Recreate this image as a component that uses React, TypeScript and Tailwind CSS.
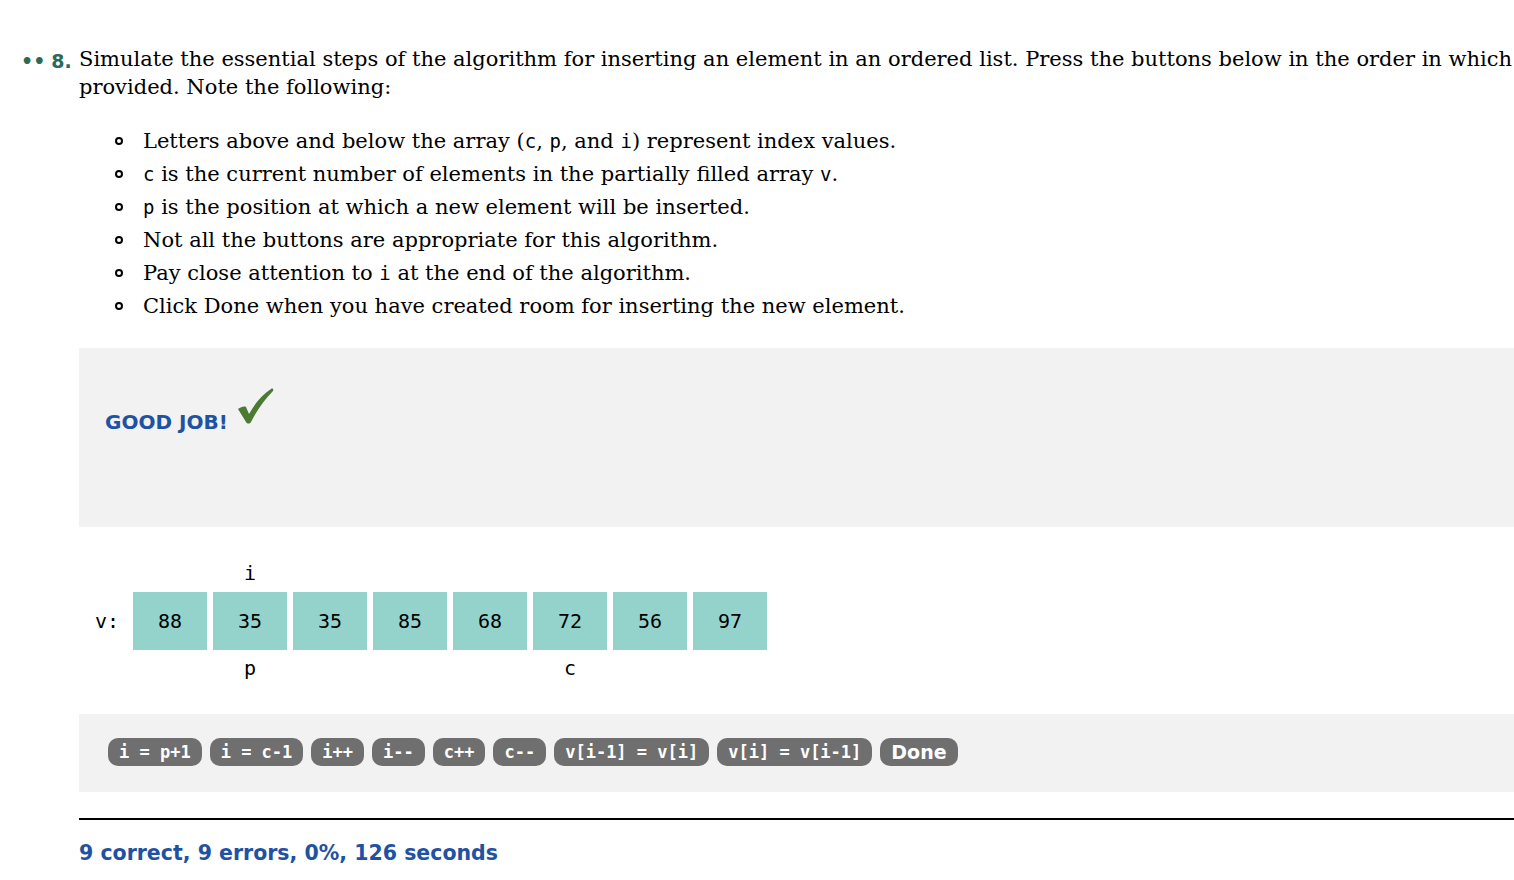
import React from 'react';

const serif = { fontFamily: '"DejaVu Serif", "Liberation Serif", serif' };
const mono = "font-['DejaVu_Sans_Mono',monospace] text-[19px] leading-none";

const notes: React.ReactNode[] = [
  <>Letters above and below the array (<code className={mono}>c</code>, <code className={mono}>p</code>, and <code className={mono}>i</code>) represent index values.</>,
  <><code className={mono}>c</code> is the current number of elements in the partially filled array <code className={mono}>v</code>.</>,
  <><code className={mono}>p</code> is the position at which a new element will be inserted.</>,
  <>Not all the buttons are appropriate for this algorithm.</>,
  <>Pay close attention to <code className={mono}>i</code> at the end of the algorithm.</>,
  <>Click Done when you have created room for inserting the new element.</>,
];

const cells = [88, 35, 35, 85, 68, 72, 56, 97];
const buttons = ['i = p+1', 'i = c-1', 'i++', 'i--', 'c++', 'c--', 'v[i-1] = v[i]', 'v[i] = v[i-1]'];

export default function App() {
  return (
    <div className="min-h-screen bg-white overflow-hidden pt-[45px]">
      <div className="flex">
        {/* question number */}
        <div className="w-[79px] shrink-0 flex items-start pl-[21px] pt-[4px] font-['DejaVu_Sans',sans-serif] font-bold text-[19px] leading-[24px] text-[#2b6a5b]">
          <span className="mr-[6px]">••</span>
          <span>8.</span>
        </div>

        <div className="w-[1436px] shrink-0">
          <p className="text-[21px] leading-[28px] text-black whitespace-nowrap" style={serif}>
            Simulate the essential steps of the algorithm for inserting an element in an ordered list. Press the buttons below in the order in which
            <br />
            provided. Note the following:
          </p>

          <ul className="mt-[26px] pl-[36px] flex flex-col gap-[5px]" style={serif}>
            {notes.map((n, i) => (
              <li key={i} className="flex items-center h-[28px] text-[21px] leading-[28px] text-black">
                <span className="w-[8px] h-[8px] rounded-full border-2 border-black mr-[20px] shrink-0"></span>
                <span>{n}</span>
              </li>
            ))}
          </ul>

          {/* feedback box */}
          <div className="mt-[28px] h-[179px] bg-[#f2f2f2] flex items-center pl-[26px] pb-[50px]">
            <span className="font-['DejaVu_Sans',sans-serif] font-bold text-[20px] text-[#1f52a2] mt-[18px]">GOOD JOB!</span>
            <svg className="ml-[8px] mb-[12px]" width="38" height="38" viewBox="0 0 38 38">
              <path d="M2 21 C5 19 8 18 10 19 L13 26 C19 15 26 7 35 1 C36 0 38 1 37 3 C29 11 21 22 15 34 C14 36 11 36 10 34 Z" fill="#4b7a33" />
            </svg>
          </div>

          {/* array */}
          <div className="mt-[33px] font-['DejaVu_Sans_Mono',monospace] text-[20px] text-black">
            <div className="flex h-[26px] items-center pl-[54px]">
              {cells.map((_, i) => (
                <div key={i} className="w-[74px] mr-[6px] text-center">{i === 1 ? 'i' : ''}</div>
              ))}
            </div>
            <div className="flex items-center mt-[6px]">
              <div className="w-[54px] pl-[16px]">v:</div>
              {cells.map((c, i) => (
                <div key={i} className="w-[74px] h-[58px] mr-[6px] bg-[#94d3cc] flex items-center justify-center">{c}</div>
              ))}
            </div>
            <div className="flex h-[26px] items-center pl-[54px] mt-[5px]">
              {cells.map((_, i) => (
                <div key={i} className="w-[74px] mr-[6px] text-center">{i === 1 ? 'p' : i === 5 ? 'c' : ''}</div>
              ))}
            </div>
          </div>

          {/* buttons */}
          <div className="mt-[33px] h-[78px] bg-[#f2f2f2] flex items-start gap-[8px] pl-[29px] pt-[24px]">
            {buttons.map((b) => (
              <button key={b} className="h-[28px] px-[11px] rounded-[10px] bg-[#6f6f6f] text-white font-['DejaVu_Sans_Mono',monospace] font-bold text-[17px] whitespace-pre leading-none">
                {b}
              </button>
            ))}
            <button className="h-[28px] px-[11px] rounded-[10px] bg-[#6f6f6f] text-white font-['DejaVu_Sans',sans-serif] font-bold text-[19px] leading-none">
              Done
            </button>
          </div>

          <div className="mt-[26px] h-[2px] bg-black"></div>

          <div className="mt-[21px] font-['DejaVu_Sans',sans-serif] font-bold text-[20.5px] leading-[24px] text-[#1f52a2]">
            9 correct, 9 errors, 0%, 126 seconds
          </div>
        </div>
      </div>
    </div>
  );
}
